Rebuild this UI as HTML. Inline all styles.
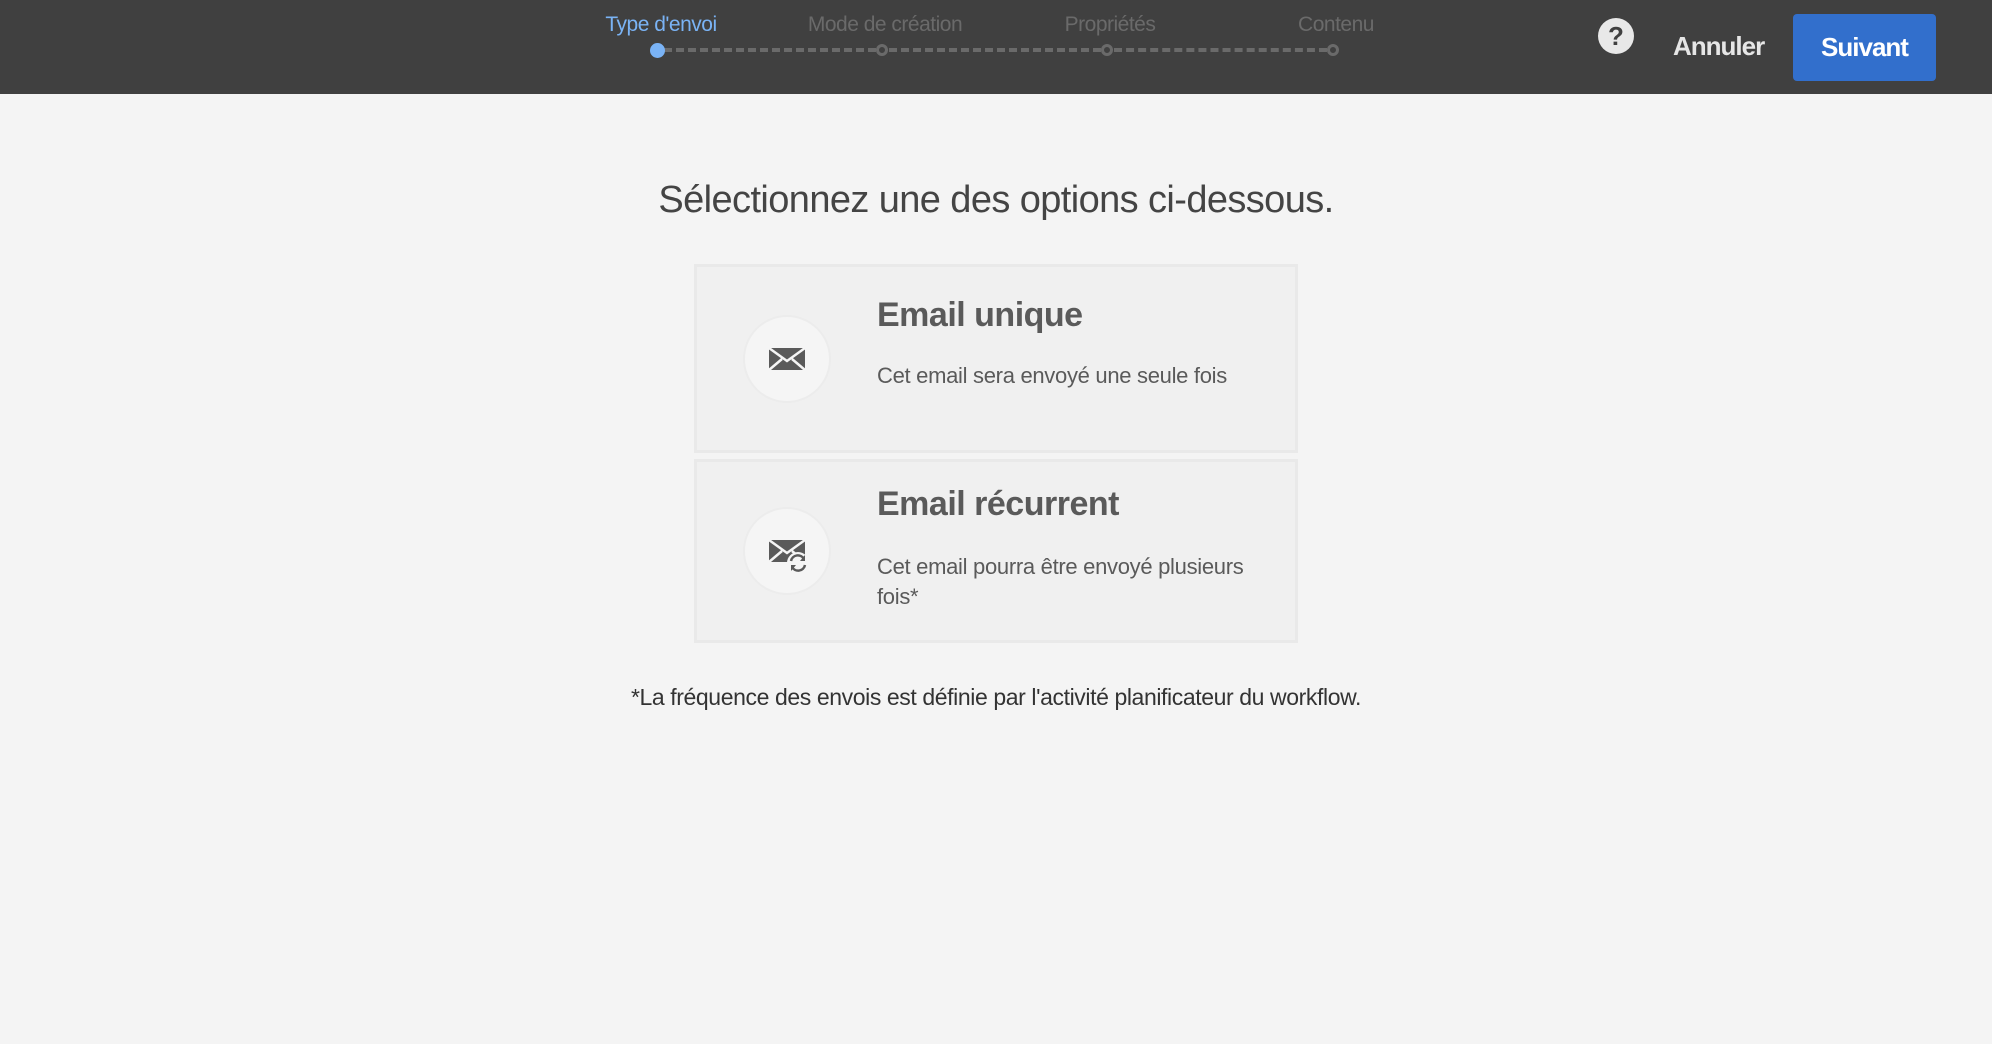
<!DOCTYPE html>
<html><head><meta charset="utf-8"><style>
*{margin:0;padding:0;box-sizing:border-box}
body{width:1992px;height:1044px;background:#f4f4f4;font-family:"Liberation Sans",sans-serif;position:relative;overflow:hidden}
.hdr{position:absolute;left:0;top:0;width:1992px;height:94px;background:#404040}
.lbl{position:absolute;top:13px;font-size:21px;color:#6a6a6a;transform:translateX(-50%);white-space:nowrap;letter-spacing:-0.5px}
.dot{position:absolute;top:44px;width:12px;height:12px;border:3px solid #6a6a6a;border-radius:50%}
.line{position:absolute;top:48px;height:0;border-top:4px dashed #6a6a6a}
.abs{position:absolute;white-space:nowrap}
.card{position:absolute;left:694px;width:604px;background:#f0f0f0;border:3px solid #e9e9e9}
.circ{position:absolute;left:46px;width:88px;height:88px;border-radius:50%;background:#f5f5f5;border:2px solid #ececec}
.t{position:absolute;left:180px;font-size:34px;font-weight:bold;color:#5a5a5a;letter-spacing:-0.5px}
.d{position:absolute;left:180px;font-size:22px;color:#5a5a5a;line-height:30px;width:390px;letter-spacing:-0.3px;white-space:normal}
</style></head><body>
<div class="hdr">
 <div class="lbl" style="left:661px;color:#7ab3f5">Type d'envoi</div>
 <div class="lbl" style="left:885px">Mode de création</div>
 <div class="lbl" style="left:1110px">Propriétés</div>
 <div class="lbl" style="left:1336px">Contenu</div>
 <div class="line" style="left:664px;width:212px"></div>
 <div class="line" style="left:889px;width:212px"></div>
 <div class="line" style="left:1114px;width:213px"></div>
 <div class="dot" style="left:650px;width:15px;height:15px;top:43px;background:#7ab3f5;border:none"></div>
 <div class="dot" style="left:876px"></div>
 <div class="dot" style="left:1101px"></div>
 <div class="dot" style="left:1327px"></div>
 <div class="abs" style="left:1598px;top:18px;width:36px;height:36px;border-radius:50%;background:#e8e8e8;color:#404040;font-weight:bold;font-size:26px;text-align:center;line-height:36px">?</div>
 <div class="abs" style="left:1673px;top:31px;font-size:26px;font-weight:bold;color:#e6e6e6;letter-spacing:-1px">Annuler</div>
 <div class="abs" style="left:1793px;top:14px;width:143px;height:67px;background:#326fcc;border-radius:4px;color:#fff;font-size:26px;font-weight:bold;text-align:center;line-height:67px;letter-spacing:-1px">Suivant</div>
</div>
<div class="abs" style="left:0;width:1992px;text-align:center;top:179px;font-size:38px;color:#444;letter-spacing:-0.6px">Sélectionnez une des options ci-dessous.</div>
<div class="card" style="top:264px;height:189px">
 <div class="circ" style="top:48px">
  <svg width="88" height="88" viewBox="0 0 88 88" style="position:absolute;left:-2px;top:-2px"><path d="M26 33h36v22H26z" fill="#5a5a5a"/><path d="M26 33l18 13 18-13M26 55l13-11M62 55l-13-11" stroke="#f5f5f5" stroke-width="2.5" fill="none"/></svg>
 </div>
 <div class="t" style="top:29px">Email unique</div>
 <div class="d" style="top:94px">Cet email sera envoyé une seule fois</div>
</div>
<div class="card" style="top:459px;height:184px">
 <div class="circ" style="top:45px">
  <svg width="88" height="88" viewBox="0 0 88 88" style="position:absolute;left:-2px;top:-2px"><path d="M26 33h36v22H26z" fill="#5a5a5a"/><path d="M26 33l18 13 18-13M26 55l13-11M62 55l-13-11" stroke="#f5f5f5" stroke-width="2.5" fill="none"/><circle cx="55" cy="56" r="11" fill="#f5f5f5"/><path d="M48 54a7 7 0 0 1 13-2M62 58a7 7 0 0 1-13 2" stroke="#5a5a5a" stroke-width="2.5" fill="none"/><path d="M62 48v6h-5z" fill="#5a5a5a"/><path d="M48 64v-6h5z" fill="#5a5a5a"/></svg>
 </div>
 <div class="t" style="top:23px">Email récurrent</div>
 <div class="d" style="top:90px">Cet email pourra être envoyé plusieurs fois*</div>
</div>
<div class="abs" style="left:0;width:1992px;text-align:center;top:684px;font-size:23px;color:#333;letter-spacing:-0.4px">*La fréquence des envois est définie par l'activité planificateur du workflow.</div>
</body></html>
